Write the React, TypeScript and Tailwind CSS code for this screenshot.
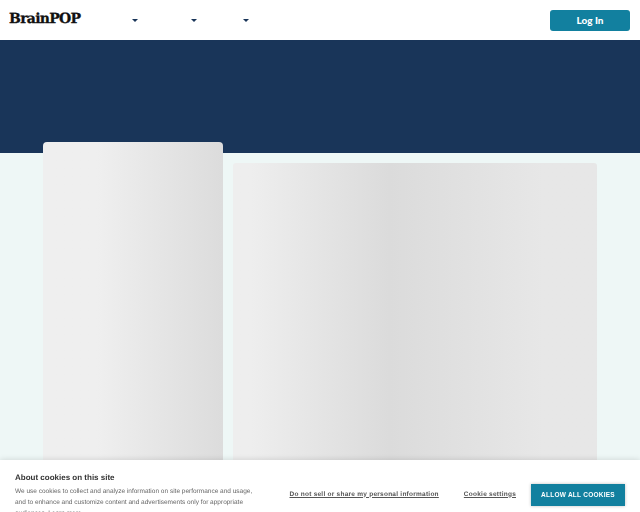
function NavCaret({ className }: { className: string }) {
  return <span className={`h-0 w-0 border-x-[3px] border-t-[3px] border-x-transparent border-t-[#193559] ${className}`} />;
}

function Header() {
  return (
    <header className="flex h-10 items-center bg-white px-[10px] [text-rendering:geometricPrecision]">
      <span className="-mt-[2px] -ml-[1px] mr-[1px] w-[72px] whitespace-nowrap font-['DejaVu_Serif'] text-[14px] font-bold leading-none tracking-[-0.7px] text-[#111] [-webkit-text-stroke:0.3px_#111]">
        BrainPOP
      </span>
      <nav className="flex items-center pt-[1px]">
        <NavCaret className="ml-[50px]" />
        <NavCaret className="ml-[53px]" />
        <NavCaret className="ml-[46px]" />
      </nav>
      <button className="ml-auto h-[21px] w-20 rounded-[3px] bg-[#12809f] font-['Lato'] text-[10px] font-black leading-none text-white">
        Log In
      </button>
    </header>
  );
}

function CookieBanner() {
  return (
    <div className="fixed inset-x-0 bottom-0 flex h-[52px] items-start justify-between overflow-hidden bg-white px-[15px] font-['Liberation_Sans'] shadow-[0_0_6px_rgba(0,0,0,0.15)] [text-rendering:geometricPrecision]">
      <div className="w-[242px] pt-[12px]">
        <h2 className="text-[8px] font-bold leading-[12px] text-[#333]">About cookies on this site</h2>
        <p className="mt-[2px] text-[6.5px] leading-[11px] text-[#666]">
          We use cookies to collect and analyze information on site performance and usage, and to enhance and customize content and advertisements only for appropriate audiences. <span className="underline">Learn more</span>
        </p>
      </div>
      <div className="flex items-center pt-[24px]">
        <a className="text-[6.5px] font-bold leading-none tracking-[0.25px] text-[#555] underline">
          Do not sell or share my personal information
        </a>
        <a className="ml-[25px] text-[6.5px] font-bold leading-none tracking-[0.25px] text-[#555] underline">
          Cookie settings
        </a>
        <button className="ml-[15px] h-[22px] w-[94px] bg-[#12809f] text-[6.5px] font-bold leading-none tracking-[0.25px] text-white shadow-[0_0_3px_rgba(0,0,0,0.25)]">
          ALLOW ALL COOKIES
        </button>
      </div>
    </div>
  );
}

export default function App() {
  return (
    <div className="h-[512px] overflow-hidden bg-[#eef7f6]">
      <Header />
      <div className="h-[113px] bg-[#193559]" />
      <main className="flex items-start pl-[43px]">
        <div className="-mt-[11px] h-[400px] w-[180px] rounded-t-[4px] bg-gradient-to-r from-[#efefef] from-30% to-[#dcdcdc]" />
        <div className="ml-[10px] mt-[10px] h-[400px] w-[364px] rounded-t-[3px] bg-gradient-to-r from-[#eeeeee] from-5% via-[#dbdbdb] via-43% to-[#e7e7e7] to-85%" />
      </main>
      <CookieBanner />
    </div>
  );
}
